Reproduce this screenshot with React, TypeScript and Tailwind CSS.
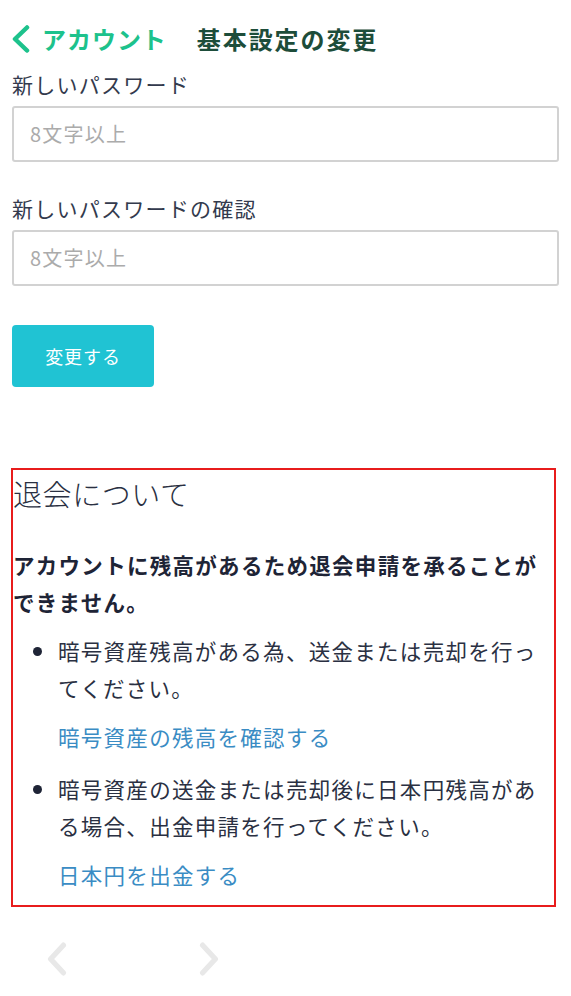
import React from "react";

const font = {
  fontFamily: '"Noto Sans CJK JP", "Noto Sans", sans-serif',
};

function Chevron({ dir, className }: { dir: "left" | "right"; className?: string }) {
  return (
    <svg viewBox="0 0 20 32" className={className} fill="none" stroke="currentColor" strokeLinecap="round" strokeLinejoin="round">
      {dir === "left" ? (
        <polyline points="16,3 4,16 16,29" strokeWidth="5" />
      ) : (
        <polyline points="4,3 16,16 4,29" strokeWidth="5" />
      )}
    </svg>
  );
}

function Field({ label }: { label: string }) {
  return (
    <div className="px-3">
      <label className="block text-[21px] leading-[28px] tracking-[0.06em] text-[#333a4d]">{label}</label>
      <div className="mt-[8px] flex h-[56px] items-center rounded-[3px] border-2 border-[#d2d2d2] bg-white px-4">
        <span className="text-[20px] tracking-[0.06em] text-[#ababab]">8文字以上</span>
      </div>
    </div>
  );
}

export default function App() {
  return (
    <div className="min-h-[996px] w-[571px] bg-white text-[#2a3042]" style={font}>
      <header className="flex h-[70px] items-center pl-3 pt-[8px]">
        <div className="flex items-center text-[#1dc28c]">
          <svg viewBox="0 0 18 28" className="mr-[12px] h-[28px] w-[18px]" fill="none" stroke="currentColor" strokeLinecap="round" strokeLinejoin="round">
            <polyline points="15,2.5 3,14 15,25.5" strokeWidth="4.5" />
          </svg>
          <span className="text-[24px] font-bold tracking-[0.04em]">アカウント</span>
        </div>
        <h1 className="ml-[30px] text-[24px] font-bold tracking-[0.08em] text-[#1d4d3a]">基本設定の変更</h1>
      </header>

      <Field label="新しいパスワード" />
      <div className="h-[32px]" />
      <Field label="新しいパスワードの確認" />

      <div className="mt-[39px] px-3">
        <button className="h-[62px] w-[142px] rounded-[4px] bg-[#20c3d3] text-[18px] tracking-[0.05em] text-white">
          変更する
        </button>
      </div>

      <section className="ml-[11px] mt-[81px] w-[545px] border-2 border-[#e81c1c] pb-[12px]">
        <h2 className="mt-[3px] text-[29px] font-light leading-[40px] tracking-[0.02em] text-[#2a3042]">退会について</h2>
        <p className="mt-[33px] text-[21.5px] font-bold leading-[37px] tracking-[0.06em] text-[#1e2436]">
          アカウントに残高があるため退会申請を承ることができません。
        </p>
        <ul className="mt-[12px] text-[21.5px] leading-[37px] tracking-[0.06em]">
          <li className="flex">
            <span className="ml-[20px] mr-[16px] mt-[15px] h-[9px] w-[9px] shrink-0 rounded-full bg-[#1e2436]" />
            <div className="pr-2">
              <p>暗号資産残高がある為、送金または売却を行ってください。</p>
              <a className="mt-[12px] block text-[#3a8cc4]">暗号資産の残高を確認する</a>
            </div>
          </li>
          <li className="mt-[15px] flex">
            <span className="ml-[20px] mr-[16px] mt-[15px] h-[9px] w-[9px] shrink-0 rounded-full bg-[#1e2436]" />
            <div className="pr-2">
              <p>暗号資産の送金または売却後に日本円残高がある場合、出金申請を行ってください。</p>
              <a className="mt-[12px] block text-[#3a8cc4]">日本円を出金する</a>
            </div>
          </li>
        </ul>
      </section>

      <div className="mt-[35px] flex items-center gap-[130px] pl-[46px] text-[#e8e8e8]">
        <Chevron dir="left" className="h-[34px] w-[22px]" />
        <Chevron dir="right" className="h-[34px] w-[22px]" />
      </div>
    </div>
  );
}
